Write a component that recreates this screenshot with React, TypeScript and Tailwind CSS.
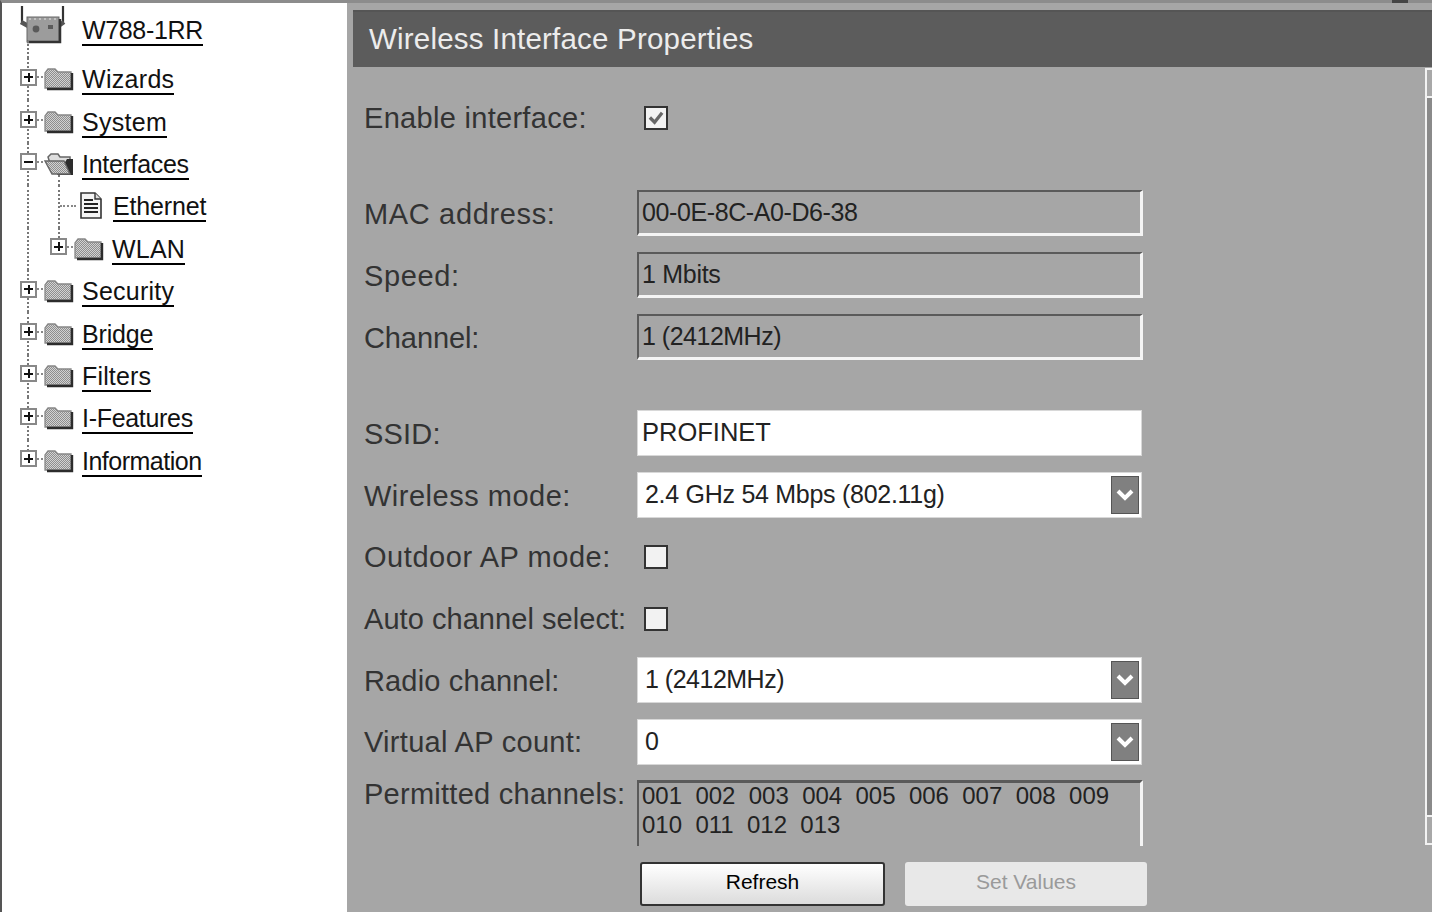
import React from "react";

const F = "font-['Liberation_Sans',Arial,sans-serif]";

function Folder({ open = false }: { open?: boolean }) {
  return (
    <svg width="32" height="26" viewBox="0 0 32 26" className="shrink-0">
      <defs>
        <pattern id="dth" width="2" height="2" patternUnits="userSpaceOnUse">
          <rect width="2" height="2" fill="#d2d2d2" />
          <rect width="1" height="1" fill="#8e8e8e" />
          <rect x="1" y="1" width="1" height="1" fill="#8e8e8e" />
        </pattern>
      </defs>
      {open ? (
        <>
          <path d="M5 6 L8 3 H15 L17 6 H27 V22 H10 Z" fill="#dedede" stroke="#666" strokeWidth="1.5" />
          <path d="M24 8 H30 V24 H14 Z" fill="#2c2c2c" />
          <path d="M2 10 H21 L27 23 H9 Z" fill="url(#dth)" stroke="#666" strokeWidth="1.4" />
        </>
      ) : (
        <>
          <path d="M2 7 L5 3 H12 L15 6 H28 V22 H2 Z" fill="url(#dth)" stroke="#888" strokeWidth="1.3" />
          <path d="M29 7 V23 H4" fill="none" stroke="#2c2c2c" strokeWidth="2.4" />
        </>
      )}
    </svg>
  );
}

function Doc() {
  return (
    <svg width="24" height="28" viewBox="0 0 24 28" className="shrink-0">
      <path d="M2 1 H16 L22 7 V26 H2 Z" fill="#f4f4f4" stroke="#333" strokeWidth="1.6" />
      <path d="M16 1 V7 H22" fill="#ddd" stroke="#333" strokeWidth="1.4" />
      <path d="M5 8 H14 M5 12 H19 M5 16 H19 M5 20 H19" stroke="#222" strokeWidth="2" />
    </svg>
  );
}

function Router() {
  return (
    <svg width="48" height="40" viewBox="0 0 48 40" className="shrink-0">
      <path d="M3 2 V18 M44 2 V18" stroke="#333" strokeWidth="2.2" />
      <path d="M2 18 L11 23 M45 18 L38 23" stroke="#555" strokeWidth="4.5" />
      <rect x="8" y="13" width="32" height="25" fill="#9c9c9c" stroke="#666" />
      <path d="M8 38 H41 V15" fill="none" stroke="#333" strokeWidth="2.5" />
      <path d="M10 15 H38" stroke="#e4e4e4" strokeWidth="1" strokeDasharray="2 3" />
      <circle cx="17" cy="25" r="3.4" fill="#5a5a5a" />
      <rect x="29" y="21" width="5" height="4" fill="#5a5a5a" />
    </svg>
  );
}

function Expander({ minus = false }: { minus?: boolean }) {
  return (
    <span className="relative flex h-[17px] w-[17px] shrink-0 items-center justify-center border-2 border-[#888] bg-white">
      <span className="absolute h-[2px] w-[9px] bg-[#111]" />
      {!minus && <span className="absolute h-[9px] w-[2px] bg-[#111]" />}
    </span>
  );
}

function Node({ label, track = "", open = false, nested = false, last = false }: { label: string; track?: string; open?: boolean; nested?: boolean; last?: boolean }) {
  return (
    <div className={`relative flex h-[42.4px] items-center ${nested ? "pl-[50px]" : "pl-[20px]"}`}>
      <span className={`absolute left-[27px] top-0 w-0 border-l-2 border-dotted border-[#777] ${last ? "h-[19px]" : "h-full"}`} />
      {nested && <span className="absolute left-[58px] top-0 h-[10px] w-0 border-l-2 border-dotted border-[#777]" />}
      {open && <span className="absolute left-[58px] top-[32px] h-[11px] w-0 border-l-2 border-dotted border-[#777]" />}
      <span className="relative -mt-[4px] flex items-center">
        <Expander minus={open} />
        <span className="w-[6px] border-t-2 border-dotted border-[#888]" />
      </span>
      <Folder open={open} />
      <a className={`ml-[7px] mt-[3px] whitespace-nowrap border-b-2 border-black text-[25px] leading-[27px] text-[#111] ${track}`}>{label}</a>
    </div>
  );
}

function Row({ label, track = "", drop = true, h = "h-[46px]", children, mb = "mb-[16px]" }: { label: string; track?: string; drop?: boolean; h?: string; children: React.ReactNode; mb?: string }) {
  return (
    <div className={`flex items-center ${h} ${mb}`}>
      <span className={`w-[273px] shrink-0 whitespace-nowrap text-[29px] leading-none text-[#333] ${drop ? "pt-[2px]" : ""} ${track}`}>{label}</span>
      {children}
    </div>
  );
}

function ReadOnly({ value, track = "" }: { value: string; track?: string }) {
  return (
    <div className={`flex h-[46px] w-[506px] items-center border-2 border-[#5a5a5a] border-b-[3px] border-r-[3px] border-b-[#f4f4f4] border-r-[#f4f4f4] pl-[3px] text-[25px] text-[#222] ${track}`}>
      {value}
    </div>
  );
}

function Select({ value, track = "" }: { value: string; track?: string }) {
  return (
    <div className="flex h-[46px] w-[505px] items-center border border-[#d8d8d8] bg-white pl-[7px] text-[25px] text-[#222]">
      <span className={`flex-1 ${track}`}>{value}</span>
      <span className="mr-[2px] flex h-[38px] w-[28px] items-center justify-center border border-[#555] bg-[#808080]">
        <svg width="20" height="14" viewBox="0 0 20 14">
          <path d="M3 3 L10 10 L17 3" fill="none" stroke="#fff" strokeWidth="4" />
        </svg>
      </span>
    </div>
  );
}

function Check({ checked = false }: { checked?: boolean }) {
  return (
    <span className="ml-[7px] flex h-[24px] w-[24px] items-center justify-center border-2 border-[#333] bg-[#f2f2f2]">
      {checked && (
        <svg width="18" height="16" viewBox="0 0 19 17">
          <path d="M3 8 L8 13 L16 3" fill="none" stroke="#666" strokeWidth="3.5" />
        </svg>
      )}
    </span>
  );
}

export default function App() {
  return (
    <div className={`${F} flex h-[912px] w-[1432px] overflow-hidden bg-[#a6a6a6]`}>
      <aside className="h-full w-[347px] shrink-0 border-l-2 border-t-[3px] border-l-[#555] border-t-[#8c8c8c] bg-white">
        <div className="relative flex h-[55px] items-center pl-[17px]">
          <span className="absolute left-[25px] top-[38px] h-[17px] w-0 border-l-2 border-dotted border-[#777]" />
          <span className="-mt-[13px]"><Router /></span>
          <a className="ml-[15px] mt-[1px] border-b-2 border-black text-[25px] leading-[27px] tracking-[-0.35px] text-[#111]">W788-1RR</a>
        </div>
        <div className="-ml-[2px]">
          <Node label="Wizards" track="tracking-[0.3px]" />
          <Node label="System" track="tracking-[0.3px]" />
          <Node label="Interfaces" track="tracking-[-0.3px]" open />
          <div className="relative flex h-[42.4px] items-center pl-[60px]">
            <span className="absolute left-[27px] top-0 h-full w-0 border-l-2 border-dotted border-[#777]" />
            <span className="absolute left-[58px] top-0 h-full w-0 border-l-2 border-dotted border-[#777]" />
            <span className="w-[16px] border-t-2 border-dotted border-[#888]" />
            <span className="ml-[3px]"><Doc /></span>
            <a className="ml-[10px] mt-[3px] border-b-2 border-black text-[25px] leading-[27px] tracking-[-0.15px] text-[#111]">Ethernet</a>
          </div>
          <Node label="WLAN" track="tracking-[0.2px]" nested />
          <Node label="Security" track="tracking-[0.25px]" />
          <Node label="Bridge" track="tracking-[-0.15px]" />
          <Node label="Filters" track="tracking-[0.15px]" />
          <Node label="I-Features" track="tracking-[-0.3px]" />
          <Node label="Information" track="tracking-[-0.5px]" last />
        </div>
      </aside>

      <main className="relative h-full flex-1 border-t-[3px] border-t-[#8c8c8c]">
        <span className="absolute right-[24px] top-[-3px] h-[3px] w-[16px] bg-[#444]" />
        <div className="ml-[6px] mt-[7px] flex h-[57px] items-center border-t-2 border-[#555] bg-[#5c5c5c] pl-[16px] text-[29.5px] tracking-[0.2px] text-[#ececec]">
          Wireless Interface Properties
        </div>

        <div className="absolute bottom-[67px] right-0 top-[65px] flex w-[7px] flex-col border-l-2 border-[#f2f2f2] bg-[#8a8a8a]">
          <span className="h-[30px] border-b-2 border-t-2 border-[#f2f2f2] bg-[#a8a8a8]" />
          <span className="flex-1" />
          <span className="h-[30px] border-b-2 border-t-2 border-[#f2f2f2] bg-[#a8a8a8]" />
        </div>

        <div className="ml-[17px] pt-[20px]">
          <Row label="Enable interface:" track="tracking-[0.3px]" drop={false} mb="mb-[41px]" h="h-[62px]"><Check checked /></Row>
          <Row label="MAC address:" track="tracking-[0.65px]"><ReadOnly value="00-0E-8C-A0-D6-38" track="tracking-[-0.4px]" /></Row>
          <Row label="Speed:" track="tracking-[0.65px]"><ReadOnly value="1 Mbits" track="tracking-[-0.3px]" /></Row>
          <Row label="Channel:" track="tracking-[-0.1px]" mb="mb-[50px]"><ReadOnly value="1 (2412MHz)" track="tracking-[-0.5px]" /></Row>
          <Row label="SSID:" track="tracking-[0.2px]">
            <div className="flex h-[46px] w-[505px] items-center border border-[#d8d8d8] bg-white pb-[2px] pl-[4px] text-[25.5px] text-[#222]">PROFINET</div>
          </Row>
          <Row label="Wireless mode:" track="tracking-[0.5px]"><Select value="2.4 GHz 54 Mbps (802.11g)" track="tracking-[-0.28px]" /></Row>
          <Row label="Outdoor AP mode:" track="tracking-[0.55px]" drop={false}><Check /></Row>
          <Row label="Auto channel select:" track="tracking-[0.05px]" drop={false} mb="mb-[15px]"><Check /></Row>
          <Row label="Radio channel:" track="tracking-[0.15px]"><Select value="1 (2412MHz)" track="tracking-[-0.5px]" /></Row>
          <Row label="Virtual AP count:" track="tracking-[0.3px]" drop={false} mb="mb-[15px]"><Select value="0" /></Row>
          <div className="flex h-[66px] items-start">
            <span className="w-[273px] shrink-0 whitespace-nowrap text-[29px] leading-[28px] tracking-[0.26px] text-[#333]">Permitted channels:</span>
            <div className="h-[66px] w-[506px] overflow-hidden border-l-2 border-r-[3px] border-t-[3px] border-l-[#5a5a5a] border-r-[#f4f4f4] border-t-[#5a5a5a] pl-[3px] text-[24px] leading-[29px] text-[#222]">
              <div className="-mt-[2px] whitespace-pre">001  002  003  004  005  006  007  008  009</div>
              <div className="whitespace-pre">010  011  012  013</div>
            </div>
          </div>
          <div className="ml-[276px] mt-[16px] flex gap-[20px]">
            <button className="h-[44px] w-[245px] rounded-[3px] border-2 border-[#333] bg-gradient-to-b from-white to-[#dcdcdc] pb-[4px] text-[21px] text-black">Refresh</button>
            <button className="h-[44px] w-[242px] rounded-[3px] bg-[#e8e8e8] pb-[4px] text-[21px] text-[#9a9a9a]">Set Values</button>
          </div>
        </div>
      </main>
    </div>
  );
}
